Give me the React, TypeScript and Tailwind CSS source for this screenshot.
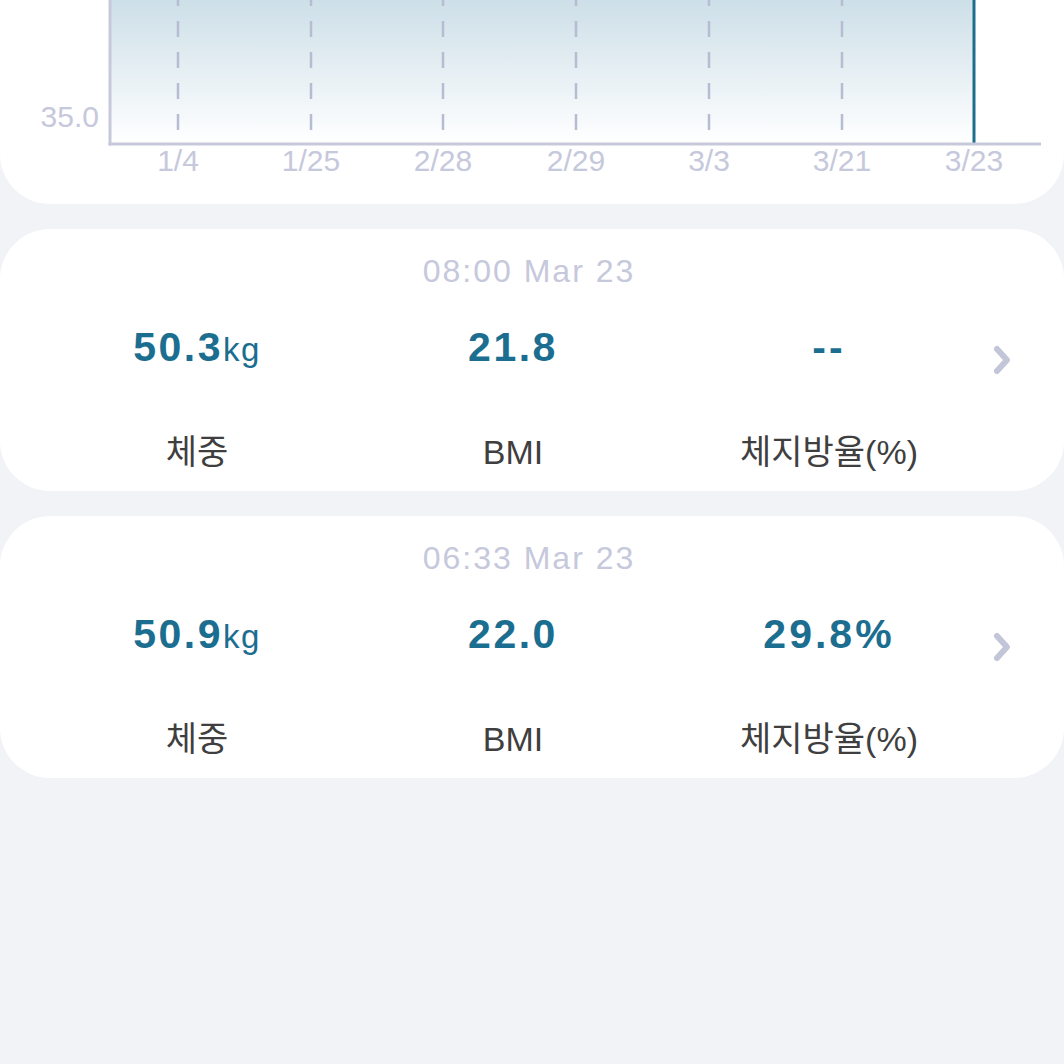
import React from "react";

const xs = [
  { x: 178, l: "1/4" },
  { x: 311, l: "1/25" },
  { x: 443, l: "2/28" },
  { x: 576, l: "2/29" },
  { x: 709, l: "3/3" },
  { x: 842, l: "3/21" },
  { x: 974, l: "3/23" },
];

const font = { fontFamily: '"Liberation Sans", "Noto Sans CJK KR", sans-serif' };

function Chevron() {
  return (
    <svg width="22" height="34" viewBox="0 0 22 34" className="block">
      <path d="M6 6 L16 17 L6 28" fill="none" stroke="#c3c5d9" strokeWidth="6" strokeLinecap="round" strokeLinejoin="round" />
    </svg>
  );
}

type Rec = { time: string; weight: string; bmi: string; fat: string };

function RecordCard({ r }: { r: Rec }) {
  return (
    <div className="mt-[25px] h-[262px] rounded-[50px] bg-white pt-[22px]">
      <div className="h-[40px] pr-[6px] text-center text-[32px] leading-[40px] tracking-[2px] text-[#c6c8dc]">{r.time}</div>
      <div className="mt-[32px] flex items-start pl-[39px]">
        <div className="grid w-[948px] grid-cols-3">
          <div className="flex flex-col items-center">
            <div className="h-[48px] leading-[48px] text-[#1b6e8f]">
              <span className="text-[41px] font-bold tracking-[2.5px]">{r.weight}</span>
              <span className="text-[33px] tracking-[1.5px]">kg</span>
            </div>
            <div className="mt-[61px] h-[40px] text-[34px] leading-[40px] text-[#3f3f3f]">체중</div>
          </div>
          <div className="flex flex-col items-center">
            <div className="h-[48px] text-[41px] font-bold leading-[48px] tracking-[2.5px] text-[#1b6e8f]">{r.bmi}</div>
            <div className="mt-[61px] h-[40px] text-[34px] leading-[40px] text-[#3f3f3f]">BMI</div>
          </div>
          <div className="flex flex-col items-center">
            <div className="h-[48px] text-[41px] font-bold leading-[48px] tracking-[3px] text-[#1b6e8f]">{r.fat}</div>
            <div className="mt-[61px] h-[40px] text-[34px] leading-[40px] text-[#3f3f3f]">체지방율(%)</div>
          </div>
        </div>
        <div className="ml-[4px] mt-[20px]">
          <Chevron />
        </div>
      </div>
    </div>
  );
}

export default function App() {
  return (
    <div className="min-h-[1064px] w-full bg-[#f2f3f7]" style={font}>
      <div className="relative h-[204px] rounded-b-[50px] bg-white">
        <svg width="1064" height="204" className="absolute left-0 top-0">
          <defs>
            <linearGradient id="g" x1="0" y1="0" x2="0" y2="1">
              <stop offset="0" stopColor="#cddfe8" />
              <stop offset="1" stopColor="#ffffff" />
            </linearGradient>
          </defs>
          <rect x="110" y="0" width="864" height="144" fill="url(#g)" />
          {xs.slice(0, 6).map((d) => (
            <line key={d.l} x1={d.x} y1={130} x2={d.x} y2={0} stroke="#b6bdd2" strokeWidth="2.5" strokeDasharray="16 15" />
          ))}
          <line x1="974" y1="0" x2="974" y2="144" stroke="#1d6d8c" strokeWidth="3" />
          <line x1="110" y1="0" x2="110" y2="145.5" stroke="#c7c9db" strokeWidth="3" />
          <line x1="108.5" y1="144" x2="1041" y2="144" stroke="#c7c9db" strokeWidth="3" />
        </svg>
        <div className="absolute right-[965px] top-[100px] text-[30px] leading-[34px] text-[#c6c8dc]">35.0</div>
        {xs.map((d) => (
          <div
            key={d.l}
            className="absolute top-[144px] -translate-x-1/2 text-[30px] leading-[34px] text-[#c6c8dc]"
            style={{ left: d.x }}
          >
            {d.l}
          </div>
        ))}
      </div>
      <RecordCard r={{ time: "08:00 Mar 23", weight: "50.3", bmi: "21.8", fat: "--" }} />
      <RecordCard r={{ time: "06:33 Mar 23", weight: "50.9", bmi: "22.0", fat: "29.8%" }} />
    </div>
  );
}
